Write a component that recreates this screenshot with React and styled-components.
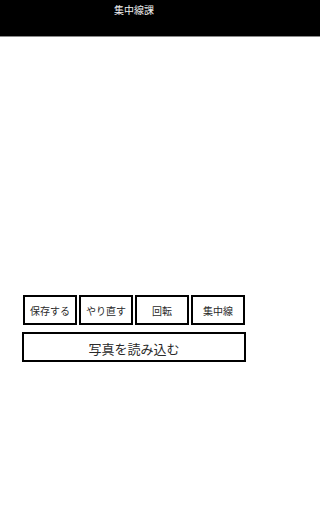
import React from 'react';
import styled, { createGlobalStyle } from 'styled-components';

const Global = createGlobalStyle`
  html, body {
    margin: 0;
    padding: 0;
    background: #fff;
    font-family: "Noto Sans CJK JP", "Noto Sans", sans-serif;
  }
`;

const Header = styled.header`
  height: 36px;
  background: #000;
  border-bottom: 1px solid #8a8a8a;
`;

const Title = styled.h1`
  width: 268px;
  margin: 0;
  color: #eee;
  font-size: 10px;
  font-weight: normal;
  line-height: 20px;
  text-align: center;
`;

const Canvas = styled.div`
  height: 258px;
  background: #fff;
`;

const Controls = styled.div`
  width: 224px;
  margin-left: 22px;
  display: flex;
  flex-direction: column;
  gap: 7px;
`;

const Row = styled.div`
  display: flex;
  gap: 2px;
  padding: 0 1px;
`;

const Button = styled.button`
  box-sizing: border-box;
  width: ${p => (p.wide ? '100%' : '54px')};
  height: 30px;
  margin: 0;
  padding: ${p => (p.wide ? '2px 0 0' : '0')};
  background: #fff;
  border: 2px solid #000;
  border-radius: 0;
  color: #2a2a2a;
  font-family: "Noto Sans CJK JP", "Noto Sans", sans-serif;
  font-size: ${p => (p.wide ? '13px' : '10px')};
  cursor: pointer;
`;

export default function App() {
  return (
    <>
      <Global />
      <Header>
        <Title>集中線課</Title>
      </Header>
      <Canvas />
      <Controls>
        <Row>
          <Button>保存する</Button>
          <Button>やり直す</Button>
          <Button>回転</Button>
          <Button>集中線</Button>
        </Row>
        <Button wide>写真を読み込む</Button>
      </Controls>
    </>
  );
}
